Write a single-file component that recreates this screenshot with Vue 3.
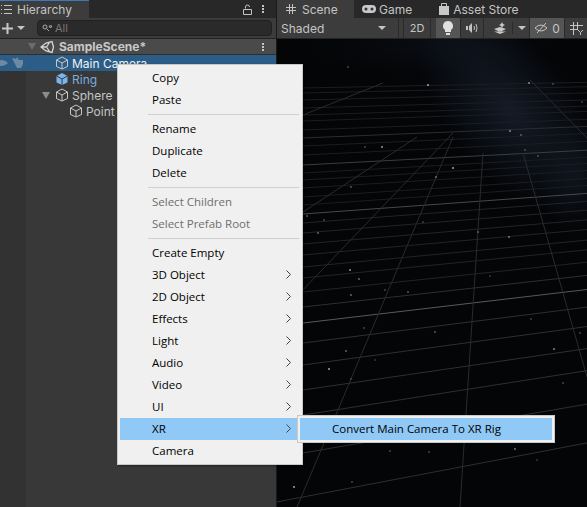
<template>
  <div class="editor">
    <section class="hierarchy">
      <div class="tabbar">
        <div class="tab active">
          <svg width="11" height="9" viewBox="0 0 11 9"><path d="M0 .5h1M0 4.500h1M0 8.500h1M3 .5h8M3 4.500h8M3 8.500h8" stroke="#c4c4c4" fill="none"/></svg>
          <span>Hierarchy</span>
        </div>
        <div class="tab-actions">
          <svg width="9" height="11" viewBox="0 0 9 11"><path d="M2.500 4.500V3a2 2 0 0 1 4 0M.5 5.500h8v5h-8z" stroke="#c4c4c4" fill="none"/></svg>
          <span class="kebab"><i></i><i></i><i></i></span>
        </div>
      </div>
      <div class="toolbar">
        <svg width="11" height="11" viewBox="0 0 11 11"><path d="M5.500 0v11M0 5.500h11" stroke="#c8c8c8" stroke-width="2"/></svg>
        <span class="caret"></span>
        <div class="search">
          <svg width="10" height="8" viewBox="0 0 10 8"><circle cx="3" cy="3" r="2" stroke="#aaa" fill="none"/><path d="M5 5l2 2M7 2h3L8.500 4z" stroke="#aaa" fill="none"/></svg>
          <span>All</span>
        </div>
      </div>
      <div class="tree">
        <div class="scene-row">
          <span class="arrow dim"></span>
          <svg width="14" height="14" viewBox="0 0 14 14"><path d="M1 7L6 3 12 1.500 13.500 7 12 12.500 6 11zM6 7H1M6.500 7L9.500 2.500M6.500 7L9.500 11.500" stroke="#d4d4d4" fill="none" stroke-width="1.300"/></svg>
          <b>SampleScene*</b>
          <span class="kebab"><i></i><i></i><i></i></span>
        </div>
        <div v-for="r in rows" :key="r.name" class="row" :class="{ selected: r.selected, prefab: r.prefab }" :style="{ paddingLeft: r.indent + 'px' }">
          <span v-if="r.arrow" class="arrow"></span>
          <svg width="14" height="14" viewBox="0 0 14 14">
            <template v-if="r.prefab">
              <path d="M7 1l5.500 3v6.500L7 13 1.500 10.500V4z" fill="#7db4e8"/>
              <path d="M1.500 4L7 7l5.500-3M7 7v6" stroke="#2f3a46" fill="none"/>
            </template>
            <path v-else d="M7 1l5.500 3v6.500L7 13 1.500 10.500V4zM1.500 4L7 7l5.500-3M7 7v6" stroke="#c8c8c8" fill="none"/>
          </svg>
          <span>{{ r.name }}</span>
        </div>
        <div class="vis">
          <svg width="12" height="8" viewBox="0 0 12 8"><path d="M0 4q6-6 12 0q-6 6-12 0z" fill="#6d8aa5"/></svg>
          <svg width="12" height="11" viewBox="0 0 12 11"><path d="M0 1l4 1 1-2 2 3h4v4l-2 4H5z" fill="#6d8aa5"/></svg>
        </div>
      </div>
    </section>

    <section class="scene">
      <div class="tabbar">
        <div class="tab active scene-tab">
          <svg width="10" height="10" viewBox="0 0 10 10"><path d="M3.500 0v10M6.500 0v10M0 3.500h10M0 6.500h10" stroke="#c4c4c4" fill="none"/></svg>
          <span>Scene</span>
        </div>
        <div class="tab game-tab">
          <svg width="14" height="8" viewBox="0 0 14 8"><rect width="14" height="8" rx="4" fill="#c8c8c8"/><circle cx="4" cy="4" r="1.500" fill="#333"/><circle cx="10" cy="4" r="1.500" fill="#333"/></svg>
          <span>Game</span>
        </div>
        <div class="tab store-tab">
          <svg width="10" height="12" viewBox="0 0 10 12"><path d="M0 3h10v9H0z" fill="#c8c8c8"/><path d="M2.500 4V.5h5V4" stroke="#c8c8c8" fill="none"/></svg>
          <span>Asset Store</span>
        </div>
      </div>
      <div class="scene-tools">
        <div class="shaded"><span>Shaded</span><span class="caret"></span></div>
        <div class="tool two-d">2D</div>
        <div class="tool lit on">
          <svg width="10" height="14" viewBox="0 0 10 14"><path d="M5 0a5 5 0 0 1 3 9v2H2V9a5 5 0 0 1 3-9zM3 12h4v2H3z" fill="#e0e0e0"/></svg>
        </div>
        <div class="tool audio">
          <svg width="13" height="10" viewBox="0 0 13 10"><path d="M0 3h2v4H0zM3 3l3-3v10L3 7z" fill="#c4c4c4"/><path d="M8 3q1 2 0 4M10 1q2 4 0 8" stroke="#c4c4c4" fill="none"/></svg>
        </div>
        <div class="tool fx">
          <svg width="13" height="12" viewBox="0 0 13 12"><path d="M8 0l1 2 2 1-2 1-1 2-1-2-2-1 2-1zM0 7l6-2 6 2-6 3zM0 9.500l6 2.500 6-2.500" fill="#c8c8c8"/></svg>
          <i class="sep"></i>
          <span class="caret"></span>
        </div>
        <div class="tool hidden-count on">
          <svg width="14" height="10" viewBox="0 0 14 10"><path d="M1 5q6-6 12 0q-6 6-12 0zM3 10L12 0" stroke="#c4c4c4" fill="none"/></svg>
          <span>0</span>
        </div>
        <div class="tool grid-btn">
          <svg width="13" height="13" viewBox="0 0 13 13"><path d="M3.500 0v13M7.500 0v8M0 3.500h13M0 7.500h8M8 8l2.500 2.500L13 8M10.500 10.500V13" stroke="#c4c4c4" fill="none"/></svg>
        </div>
      </div>
      <div class="viewport">
        <svg width="310" height="468" viewBox="277 39 310 468">
          <defs>
            <radialGradient id="nebula">
              <stop offset="0" stop-color="#1a2536" stop-opacity="0.7"/>
              <stop offset="1" stop-color="#1a2536" stop-opacity="0"/>
            </radialGradient>
          </defs>
          <ellipse cx="510" cy="110" rx="62" ry="130" fill="url(#nebula)" transform="rotate(-40 510 110)"/>
          <ellipse cx="430" cy="45" rx="120" ry="30" fill="url(#nebula)" opacity="0.3"/>
          <ellipse cx="575" cy="175" rx="35" ry="60" fill="url(#nebula)" opacity="0.5"/>
          <line v-for="(l, i) in across" :key="'h' + i" x1="277" :y1="l.y1" x2="587" :y2="l.y2" :stroke="l.c"/>
          <path v-for="(d, i) in depth" :key="'v' + i" :d="d" stroke="#2a2b2d" fill="none"/>
          <ellipse v-for="(s, i) in stars" :key="'s' + i" :cx="s[0]" :cy="s[1]" rx="0.8" ry="1.1" fill="#c4c8d0" :opacity="s[2]"/>
        </svg>
      </div>
    </section>

    <div class="menu">
      <template v-for="(m, i) in menu" :key="i">
        <hr v-if="m === '-'" />
        <div v-else class="item" :class="{ off: m.off, hot: m.hot }">
          <span>{{ m.t }}</span>
          <svg v-if="m.sub" width="5" height="9" viewBox="0 0 5 9"><path d="M.5.500l4 4-4 4" stroke="#444" fill="none"/></svg>
        </div>
      </template>
    </div>
    <div class="submenu"><div class="sub-item">Convert Main Camera To XR Rig</div></div>
  </div>
</template>

<script setup>
const rows = [
  { name: 'Main Camera', indent: 55, selected: true },
  { name: 'Ring', indent: 55, prefab: true },
  { name: 'Sphere', indent: 42, arrow: true },
  { name: 'Point Light', indent: 69 }
]

const menu = [
  { t: 'Copy' }, { t: 'Paste' }, '-',
  { t: 'Rename' }, { t: 'Duplicate' }, { t: 'Delete' }, '-',
  { t: 'Select Children', off: true }, { t: 'Select Prefab Root', off: true }, '-',
  { t: 'Create Empty' }, { t: '3D Object', sub: true }, { t: '2D Object', sub: true },
  { t: 'Effects', sub: true }, { t: 'Light', sub: true }, { t: 'Audio', sub: true },
  { t: 'Video', sub: true }, { t: 'UI', sub: true }, { t: 'XR', sub: true, hot: true },
  { t: 'Camera' }
]

// the viewBox of the viewport uses page coordinates, so these read straight off the screenshot
// y values are where a grid line crosses x=303, the slope grows towards the camera
const faintY = [88, 93, 100, 108, 115, 121, 130, 146, 155, 173, 180, 188, 197, 205, 223, 233, 244, 255, 267, 278, 292, 307, 343, 365, 390, 415, 453, 497]
const strong = { 138: '#2c2d30', 165: '#3c3d3f', 214: '#48494b', 323: '#58595b' }
function across_line(y, c) {
  const slope = (y - 40) / 2400
  return { y1: y + slope * 26, y2: y - slope * 284, c }
}
const across = [
  ...faintY.map(y => across_line(y, y > 300 ? '#2e2f31' : y > 205 ? '#232426' : '#1c1d21')),
  ...Object.keys(strong).map(y => across_line(Number(y), strong[y]))
]

const depth = [
  'M303 115L383 83',
  'M530 80L587 138',
  'M303 212L417 137',
  'M277 317L453 133',
  'M297 507L453 137',
  'M460 507L468 383L483 153',
  'M523 153L587 377'
]

const stars = [
  [428, 85, 1], [529, 83, .8], [348, 67, .4], [553, 84, .4], [510, 131, .8], [521, 135, .5], [382, 147, .9],
  [365, 147, .4], [453, 168, 1], [436, 177, .6], [351, 187, .5], [307, 216, .5], [324, 220, .4], [318, 233, .6],
  [509, 237, .7], [478, 232, .5], [423, 222, .35], [525, 150, .4], [538, 156, .4], [582, 102, .4],
  [350, 270, .9], [359, 279, .6], [351, 295, .6], [408, 292, .5], [385, 290, .4], [346, 351, .6], [329, 369, 1],
  [375, 360, .3], [351, 379, .3], [435, 332, .5], [554, 349, .8], [364, 328, .4], [490, 276, .3], [531, 319, .35],
  [580, 333, .4], [563, 383, .4], [294, 487, 1], [515, 449, .7], [390, 451, .4], [429, 452, .4], [352, 482, .4], [537, 460, .3]
]
</script>

<style scoped>
.editor { position: relative; width: 587px; height: 507px; display: flex; overflow: hidden; background: #191919; font-family: Inter, "Liberation Sans", sans-serif; font-size: 12px; color: #c4c4c4; }
.editor * { box-sizing: border-box; }
.hierarchy { width: 277px; flex: none; background: #383838; border-right: 1px solid #191919; display: flex; flex-direction: column; }
.scene { flex: 1; min-width: 0; display: flex; flex-direction: column; }
.tabbar { height: 18px; background: #282828; display: flex; align-items: stretch; }
.tab { display: flex; align-items: center; gap: 5px; }
.tab.active { background: #3c3c3c; }
.hierarchy .tab.active { width: 89px; padding-left: 1px; gap: 5px; border-top: 1px solid #3a79bb; }
.tab-actions { margin-left: auto; display: flex; align-items: center; gap: 10px; padding-right: 12px; }
.kebab { display: inline-flex; flex-direction: column; gap: 1px; }
.kebab i { width: 2px; height: 2px; background: #c4c4c4; display: block; }
.toolbar { height: 21px; display: flex; align-items: center; padding-left: 2px; background: #3c3c3c; border-bottom: 1px solid #232323; }
.caret { width: 0; height: 0; border-left: 4px solid transparent; border-right: 4px solid transparent; border-top: 4px solid #c4c4c4; display: inline-block; }
.toolbar .caret { margin-left: 4px; }
.search { margin-left: 12px; width: 235px; height: 16px; border-radius: 4px; background: #2a2a2a; border: 1px solid #212121; display: flex; align-items: center; gap: 3px; padding-left: 4px; color: #787878; font-size: 11px; }
.tree { position: relative; flex: 1; background: linear-gradient(to right, #323232 26px, #383838 26px); }
.scene-row { height: 16px; background: #4a4a4a; display: flex; align-items: center; gap: 4px; padding-left: 28px; border-bottom: 1px solid #2e2e2e; color: #c8c8c8; }
.scene-row b { margin-left: 1px; }
.scene-row .kebab { margin-left: auto; margin-right: 12px; }
.row { height: 16px; display: flex; align-items: center; gap: 3px; position: relative; }
.row.selected { background: #2c5d87; color: #f0f0f0; }
.row.prefab { color: #7cacdf; }
.arrow { width: 0; height: 0; margin-right: 2px; border-left: 4px solid transparent; border-right: 4px solid transparent; border-top: 7px solid #8c8c8c; }
.arrow.dim { border-top-color: #6c6c6c; margin-right: 0; }
.vis { position: absolute; left: -4px; top: 18px; display: flex; gap: 4px; align-items: center; }
.scene-tab { width: 77px; padding-left: 9px; gap: 6px; }
.game-tab { margin-left: 8px; gap: 3px; }
.store-tab { margin-left: 27px; gap: 4px; }
.scene-tools { height: 21px; background: #3c3c3c; display: flex; align-items: stretch; border-bottom: 1px solid #232323; }
.shaded { width: 122px; display: flex; justify-content: space-between; align-items: center; padding: 0 12px 0 4px; border-right: 1px solid #2a2a2a; }
.tool { display: flex; align-items: center; justify-content: center; gap: 4px; background: #3c3c3c; border-right: 1px solid #2a2a2a; font-size: 11px; }
.tool.on { background: #555; }
.two-d { width: 28px; margin-left: 4px; border-left: 1px solid #2a2a2a; }
.lit { width: 25px; margin-left: 5px; }
.audio { width: 23px; }
.fx { width: 42px; margin-left: 4px; justify-content: flex-start; padding-left: 6px; gap: 5px; }
.sep { width: 1px; height: 12px; background: #2a2a2a; }
.hidden-count { width: 35px; font-size: 12px; }
.grid-btn { flex: 1; border-right: none; justify-content: flex-start; padding-left: 5px; }
.viewport { flex: 1; min-height: 0; background: #040507; overflow: hidden; }
.viewport svg { display: block; }
.menu { position: absolute; left: 117px; top: 64px; width: 186px; height: 401px; padding: 2px; background: #f0f0f0; border: 1px solid #c9c9c9; font-family: "Open Sans", sans-serif; font-size: 11.5px; color: #000; box-shadow: 1px 1px 2px rgba(0,0,0,.4); }
.item { height: 22px; display: flex; align-items: center; justify-content: space-between; padding: 0 9px 1px 32px; }
.item.off { color: #6e6e6e; }
.item.hot { background: #90c8f6; margin-right: -2px; padding-right: 11px; }
.menu hr { margin: 3px 1px 3px 28px; border: none; border-top: 1px solid #d0d0d0; height: 1px; }
.submenu { position: absolute; left: 297px; top: 415px; width: 258px; height: 28px; background: #f0f0f0; border: 1px solid #c9c9c9; padding: 2px; font-family: "Open Sans", sans-serif; font-size: 11.5px; color: #000; }
.sub-item { height: 22px; background: #90c8f6; display: flex; align-items: center; padding: 0 0 1px 32px; }
</style>
